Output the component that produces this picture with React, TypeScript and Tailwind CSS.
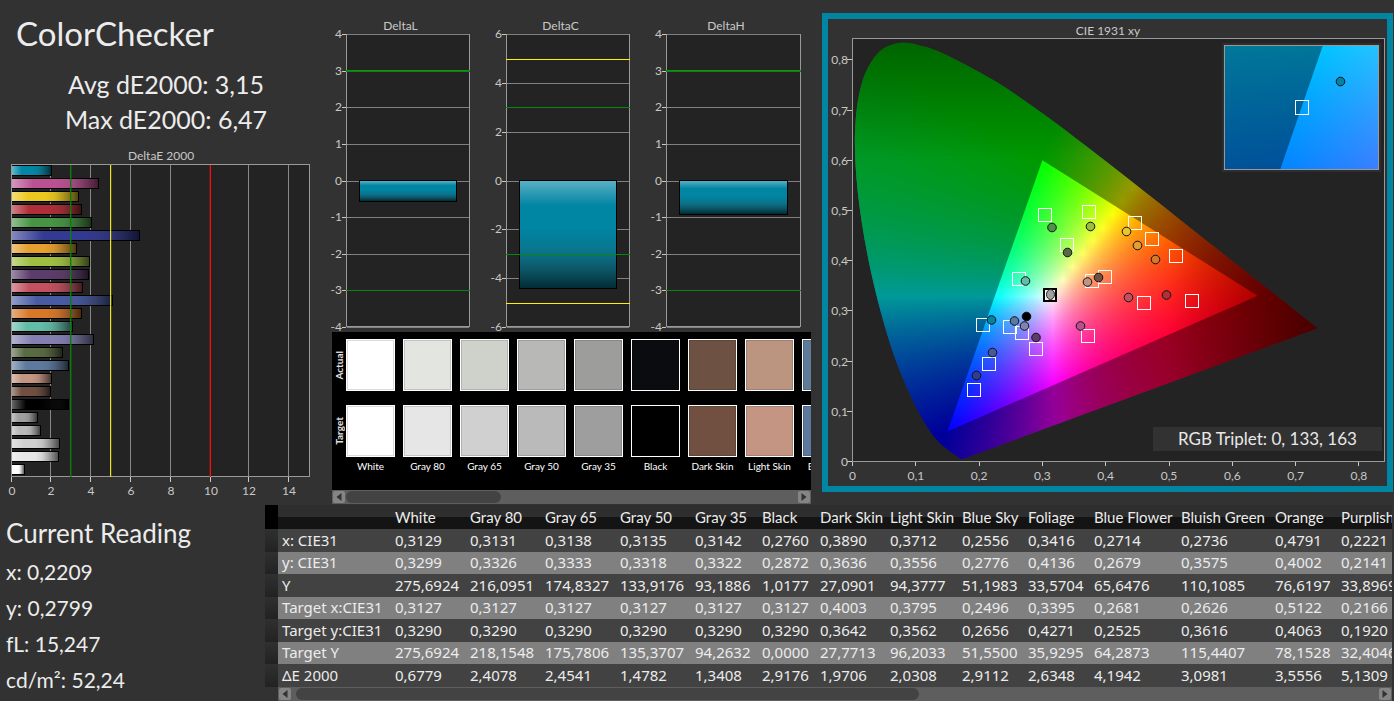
import React from "react";

type Pt = [number, number];

const LATO = "Lato, 'Liberation Sans', sans-serif";

/* ---------- measurement data ---------- */

const barRows: { color: string; value: number }[] = [
  { color: "#0087a5", value: 2.05 },
  { color: "#bb5192", value: 4.42 },
  { color: "#ebc81f", value: 3.42 },
  { color: "#b02e37", value: 3.57 },
  { color: "#479444", value: 4.07 },
  { color: "#323a92", value: 6.47 },
  { color: "#e6a02e", value: 3.32 },
  { color: "#a0bf40", value: 3.97 },
  { color: "#5c3c6a", value: 3.92 },
  { color: "#c35060", value: 3.62 },
  { color: "#485aa2", value: 5.15 },
  { color: "#d97829", value: 3.56 },
  { color: "#61bca8", value: 3.1 },
  { color: "#8380b1", value: 4.19 },
  { color: "#586b41", value: 2.63 },
  { color: "#5d7a9e", value: 2.91 },
  { color: "#c49582", value: 2.05 },
  { color: "#725041", value: 1.99 },
  { color: "#000000", value: 2.92 },
  { color: "#9f9f9f", value: 1.34 },
  { color: "#bababa", value: 1.5 },
  { color: "#d0d0d0", value: 2.46 },
  { color: "#e6e6e6", value: 2.41 },
  { color: "#ffffff", value: 0.7 },
];

const swatches = [
  { name: "White", actual: "bg-[#ffffff]", target: "bg-[#ffffff]" },
  { name: "Gray 80", actual: "bg-[#e3e5e1]", target: "bg-[#e6e6e6]" },
  { name: "Gray 65", actual: "bg-[#cfd1cb]", target: "bg-[#d0d0d0]" },
  { name: "Gray 50", actual: "bg-[#b8b8b6]", target: "bg-[#bababa]" },
  { name: "Gray 35", actual: "bg-[#9d9d9b]", target: "bg-[#9e9e9e]" },
  { name: "Black", actual: "bg-[#0b0c10]", target: "bg-[#000000]" },
  { name: "Dark Skin", actual: "bg-[#6d5142]", target: "bg-[#725041]" },
  { name: "Light Skin", actual: "bg-[#bb9580]", target: "bg-[#c49582]" },
  { name: "Blue Sky", actual: "bg-[#5f7b98]", target: "bg-[#5d7a9e]" },
];

const columns = [
  "White", "Gray 80", "Gray 65", "Gray 50", "Gray 35", "Black", "Dark Skin",
  "Light Skin", "Blue Sky", "Foliage", "Blue Flower", "Bluish Green", "Orange", "Purplish Blue",
];

const columnWidths = [
  "w-[13px]", "w-[113px]", "w-[75px]", "w-[75px]", "w-[75px]", "w-[75px]", "w-[67px]", "w-[58px]",
  "w-[70px]", "w-[72px]", "w-[66px]", "w-[66px]", "w-[87px]", "w-[94px]", "w-[66px]", "w-[100px]",
];

const tableRows: { label: string; cells: string[] }[] = [
  { label: "x: CIE31", cells: ["0,3129", "0,3131", "0,3138", "0,3135", "0,3142", "0,2760", "0,3890", "0,3712", "0,2556", "0,3416", "0,2714", "0,2736", "0,4791", "0,2221"] },
  { label: "y: CIE31", cells: ["0,3299", "0,3326", "0,3333", "0,3318", "0,3322", "0,2872", "0,3636", "0,3556", "0,2776", "0,4136", "0,2679", "0,3575", "0,4002", "0,2141"] },
  { label: "Y", cells: ["275,6924", "216,0951", "174,8327", "133,9176", "93,1886", "1,0177", "27,0901", "94,3777", "51,1983", "33,5704", "65,6476", "110,1085", "76,6197", "33,8969"] },
  { label: "Target x:CIE31", cells: ["0,3127", "0,3127", "0,3127", "0,3127", "0,3127", "0,3127", "0,4003", "0,3795", "0,2496", "0,3395", "0,2681", "0,2626", "0,5122", "0,2166"] },
  { label: "Target y:CIE31", cells: ["0,3290", "0,3290", "0,3290", "0,3290", "0,3290", "0,3290", "0,3642", "0,3562", "0,2656", "0,4271", "0,2525", "0,3616", "0,4063", "0,1920"] },
  { label: "Target Y", cells: ["275,6924", "218,1548", "175,7806", "135,3707", "94,2632", "0,0000", "27,7713", "96,2033", "51,5500", "35,9295", "64,2873", "115,4407", "78,1528", "32,4046"] },
  { label: "ΔE 2000", cells: ["0,6779", "2,4078", "2,4541", "1,4782", "1,3408", "2,9176", "1,9706", "2,0308", "2,9112", "2,6348", "4,1942", "3,0981", "3,5556", "5,1309"] },
];

/* ---------- DeltaE bar chart ---------- */

function DeltaEChart() {
  const grid = [50, 90, 130, 170, 248, 288];
  const ticks: [number, string][] = [
    [11, "0"], [50, "2"], [90, "4"], [130, "6"], [170, "8"], [210, "10"], [248, "12"], [288, "14"],
  ];
  return (
    <svg viewBox="0 148 330 352" className="block w-full" role="img" aria-label="DeltaE 2000" fontFamily={LATO} fontSize="12" fill="#c8c8c8">
      <defs>
        <linearGradient id="shadeH" x1="0" x2="1" y1="0" y2="0">
          <stop offset="0" stopColor="#fff" stopOpacity="0.4" />
          <stop offset="0.25" stopColor="#fff" stopOpacity="0" />
          <stop offset="0.5" stopColor="#333" stopOpacity="0" />
          <stop offset="0.65" stopColor="#333" stopOpacity="0.1" />
          <stop offset="1" stopColor="#000" stopOpacity="0.65" />
        </linearGradient>
      </defs>
      <text x="161" y="160" textAnchor="middle">DeltaE 2000</text>
      <rect x="11.5" y="164.5" width="298" height="312" fill="#232323" />
      <g stroke="#888" shapeRendering="crispEdges">
        {grid.map((x) => <path key={x} d={`M${x + 0.5} 165V476`} />)}
      </g>
      {barRows.map((b, i) => {
        const w = Math.round(b.value * 19.87);
        return (
          <g key={i}>
            <rect x="11" y={165 + 13 * i} width={w} height="11" fill="#000" />
            <rect x="12" y={166 + 13 * i} width={w - 2} height="9" fill={b.color} />
            <rect x="12" y={166 + 13 * i} width={w - 2} height="9" fill="url(#shadeH)" />
          </g>
        );
      })}
      <rect x="11.5" y="164.5" width="298" height="312" fill="none" stroke="#999" />
      <path d="M70.5 165V477" stroke="#0a7d0a" />
      <path d="M71.5 165V477" stroke="#0a7d0a" strokeOpacity="0.4" />
      <path d="M110.5 165V477" stroke="#f0e800" />
      <path d="M111.5 165V477" stroke="#fff" strokeOpacity="0.15" />
      <path d="M210.5 165V477" stroke="#f80c0c" />
      <path d="M209.5 165V477" stroke="#f80c0c" strokeOpacity="0.3" />
      {ticks.map(([x, label]) => (
        <g key={label}>
          <path d={`M${x + 0.5} 477V482`} stroke="#c8c8c8" />
          <text x={x + 1} y="495" textAnchor="middle">{label}</text>
        </g>
      ))}
    </svg>
  );
}

/* ---------- DeltaL / DeltaC / DeltaH ---------- */

type DeltaProps = {
  title: string; x: number; width: number; max: number; step: number;
  bar: number; green: number; yellow?: number;
};

function DeltaPlot({ title, x, width, max, step, bar, green, yellow }: DeltaProps) {
  const yOf = (v: number) => Math.round(180.6 - (v * 146.5) / max);
  const values: number[] = [];
  for (let v = -max; v <= max; v += step) values.push(v);
  return (
    <g>
      <text x={x + width / 2 - 7} y="30" textAnchor="middle">{title}</text>
      <rect x={x + 0.5} y="34.5" width={width} height="292" fill="#232323" stroke="#999" />
      {values.map((v) => (
        <g key={v}>
          <path d={`M${x + 1} ${yOf(v) + 0.5}H${x + width}`} stroke="#808080" />
          <path d={`M${x - 4} ${yOf(v) + 0.5}H${x}`} stroke="#c8c8c8" />
          <text x={x - 4} y={yOf(v) + 4} textAnchor="end">{v}</text>
        </g>
      ))}
      <rect x={x + 13} y="180" width={width - 25} height={yOf(-bar) - 180} fill="#000" />
      <rect x={x + 14} y="181" width={width - 27} height={yOf(-bar) - 182} fill="#0085a3" />
      <rect x={x + 14} y="181" width={width - 27} height={yOf(-bar) - 182} fill="url(#shadeV)" />
      {green % step === 0 && (
        <path d={`M${x} ${yOf(green)}H${x + width + 1}`} stroke="#1c8c1c" strokeWidth="2" />
      )}
      {[green, -green].map((v) => (
        <path key={v} d={`M${x} ${yOf(v) + 0.5}H${x + width + 1}`} stroke="#0a860a" />
      ))}
      {yellow !== undefined && [yellow, -yellow].map((v) => (
        <path key={v} d={`M${x} ${yOf(v) + 0.5}H${x + width + 1}`} stroke="#fff200" />
      ))}
    </g>
  );
}

function DeltaCharts() {
  return (
    <svg viewBox="330 0 482 332" className="block w-full overflow-visible" role="img" aria-label="DeltaL, DeltaC and DeltaH" fontFamily={LATO} fontSize="12" fill="#c8c8c8">
      <defs>
        <linearGradient id="shadeV" x1="0" x2="0" y1="0" y2="1">
          <stop offset="0" stopColor="#fff" stopOpacity="0.35" />
          <stop offset="0.23" stopColor="#fff" stopOpacity="0" />
          <stop offset="0.45" stopColor="#333" stopOpacity="0" />
          <stop offset="0.65" stopColor="#333" stopOpacity="0.2" />
          <stop offset="1" stopColor="#000" stopOpacity="0.68" />
        </linearGradient>
      </defs>
      <DeltaPlot title="DeltaL" x={346} width={123} max={4} step={1} bar={0.58} green={3} />
      <DeltaPlot title="DeltaC" x={506} width={123} max={6} step={2} bar={4.43} green={3} yellow={5} />
      <DeltaPlot title="DeltaH" x={666} width={134} max={4} step={1} bar={0.94} green={3} />
    </svg>
  );
}

/* ---------- CIE chart ---------- */

const locus: Pt[] = [
  [0.1741, 0.005], [0.1714, 0.0051], [0.1644, 0.0109], [0.1566, 0.0177], [0.144, 0.0297],
  [0.1355, 0.0399], [0.1241, 0.0578], [0.1096, 0.0868], [0.0913, 0.1327], [0.0687, 0.2007],
  [0.0454, 0.295], [0.0235, 0.4127], [0.0082, 0.5384], [0.0039, 0.6548], [0.0139, 0.7502],
  [0.0389, 0.812], [0.0743, 0.8338], [0.1142, 0.8262], [0.1547, 0.8059], [0.2296, 0.7543],
  [0.3016, 0.6923], [0.3731, 0.6245], [0.4441, 0.5547], [0.5125, 0.4866], [0.5752, 0.4242],
  [0.627, 0.3725], [0.6658, 0.334], [0.6915, 0.3083], [0.719, 0.2809], [0.7347, 0.2653],
];

const px = (x: number) => 852.5 + x * 633;
const py = (y: number) => 461.5 - y * 502;

function smoothPath(points: Pt[]) {
  const p = points.map(([x, y]) => [px(x), py(y)] as Pt);
  let d = `M${p[0][0]} ${p[0][1]}`;
  for (let i = 0; i < p.length - 1; i++) {
    const a = p[Math.max(i - 1, 0)];
    const b = p[i];
    const c = p[i + 1];
    const e = p[Math.min(i + 2, p.length - 1)];
    d += `C${b[0] + (c[0] - a[0]) / 6} ${b[1] + (c[1] - a[1]) / 6} ${c[0] - (e[0] - b[0]) / 6} ${c[1] - (e[1] - b[1]) / 6} ${c[0]} ${c[1]}`;
  }
  return d + "Z";
}

const locusPath = smoothPath(locus);
const gamutPath = `M${px(0.64)} ${py(0.33)}L${px(0.3)} ${py(0.6)}L${px(0.15)} ${py(0.06)}Z`;

function chromaColor(x: number, y: number) {
  const z = 1 - x - y;
  const rgb = [
    3.2406 * x - 1.5372 * y - 0.4986 * z,
    -0.9689 * x + 1.8758 * y + 0.0415 * z,
    0.0557 * x - 0.204 * y + 1.057 * z,
  ].map((v) => Math.max(v, 0));
  const top = Math.max(...rgb);
  const red = x < 0.5 ? 1 : Math.max(1 - (x - 0.5) * 2.3, 0.5);
  const green = y < 0.6 ? 1 : 1 - (y - 0.6) * 1.45;
  const [r, g, b] = rgb.map((v) => Math.round((v / top) * 255 * red * green));
  return `rgb(${r},${g},${b})`;
}

type FieldProps = {
  id: string; left: number; top: number; width: number; height: number;
  toX: (p: number) => number; toY: (p: number) => number;
};

/* Chromaticity field painted as thin horizontal gradients. */
function ColorField({ id, left, top, width, height, toX, toY }: FieldProps) {
  const rows = Array.from({ length: Math.ceil(height / 2) }, (_, i) => top + i * 2);
  const stops = Math.ceil(width / 10);
  return (
    <g shapeRendering="crispEdges">
      {rows.map((y, i) => (
        <React.Fragment key={y}>
          <linearGradient id={`${id}${i}`} gradientUnits="userSpaceOnUse" x1={left} x2={left + width} y1="0" y2="0">
            {Array.from({ length: stops + 1 }, (_, s) => (
              <stop key={s} offset={s / stops} stopColor={chromaColor(toX(left + (s / stops) * width), toY(y + 1))} />
            ))}
          </linearGradient>
          <rect x={left} y={y} width={width} height={Math.min(2, top + height - y)} fill={`url(#${id}${i})`} />
        </React.Fragment>
      ))}
    </g>
  );
}

const targets: Pt[] = [
  [1045, 215], [1089, 212], [1135, 223], [1152, 239], [1176, 256], [1067, 245], [1019, 279],
  [1105, 277], [1092, 281], [1192, 301], [1144, 303], [983, 325], [1010, 327], [1022, 333],
  [1036, 349], [1088, 336], [989, 364], [974, 390],
];

const readings: [number, number, string][] = [
  [1052, 227.5, "#4a9446"], [1090.5, 226.5, "#a0bc40"], [1126.5, 231.5, "#e8c828"],
  [1137.5, 245.5, "#e6a030"], [1155.5, 259.5, "#d87828"], [1067.5, 252.5, "#566a40"],
  [1025.5, 281, "#62bca8"], [1098.5, 277.5, "#705040"], [1087.5, 282, "#c09480"],
  [1128.5, 297.5, "#c05060"], [1166.5, 295, "#b03038"], [991.5, 320, "#0085a3"],
  [1014.5, 321, "#5c7aa0"], [1024.5, 326, "#8480b0"], [1026.5, 316.5, "#000000"],
  [1036, 337.5, "#5c3c6c"], [1080.5, 326, "#b85090"], [992.5, 352.5, "#4858a0"],
  [976.5, 375.5, "#343c90"],
];

function CieChart() {
  const ticks = [0, 0.1, 0.2, 0.3, 0.4, 0.5, 0.6, 0.7, 0.8];
  const label = (t: number) => String(t).replace(".", ",");
  return (
    <svg viewBox="828 19 559 467" className="block w-full" role="img" aria-label="CIE 1931 xy" fontFamily={LATO} fontSize="12" fill="#c8c8c8">
      <defs>
        <clipPath id="locusClip"><path d={locusPath} /></clipPath>
      </defs>
      <text x="1108" y="35" textAnchor="middle">CIE 1931 xy</text>
      <rect x="852.5" y="38.5" width="532" height="423" fill="#232323" stroke="#999" />
      <g clipPath="url(#locusClip)">
        <ColorField id="f" left={853} top={40} width={470} height={422} toX={(p) => (p - 852.5) / 633} toY={(p) => (461.5 - p) / 502} />
        <path d={`M840 30H1384V470H840Z${gamutPath}`} fill="#000" fillOpacity="0.4" fillRule="evenodd" />
      </g>

      {ticks.map((t) => (
        <g key={t}>
          <path d={`M847 ${Math.floor(py(t)) + 0.5}H852`} stroke="#c8c8c8" />
          <text x="848" y={Math.floor(py(t)) + 5} textAnchor="end">{label(t)}</text>
          <path d={`M${Math.floor(px(t)) + 0.5} 462V466`} stroke="#c8c8c8" />
          <text x={px(t)} y="480" textAnchor="middle">{label(t)}</text>
        </g>
      ))}

      <g fill="none" stroke="#fff" shapeRendering="crispEdges">
        {targets.map(([x, y]) => <rect key={`${x}-${y}`} x={x - 6.5} y={y - 6.5} width="13" height="13" />)}
      </g>
      <rect x="1044" y="289" width="12" height="12" fill="#fff" fillOpacity="0.6" stroke="#000" strokeWidth="2" />
      <ellipse cx="1050.5" cy="294.5" rx="4" ry="5" fill="#a0a0a0" stroke="#222" />
      {readings.map(([x, y, c]) => (
        <circle key={`${x}-${y}`} cx={x} cy={y} r="4.3" fill={c} stroke="#111" />
      ))}

      <rect x="1222" y="43" width="159" height="129" fill="#2e2e2e" />
      <ColorField id="z" left={1224} top={45} width={155} height={125} toX={(p) => 0.2088 + (p - 1302) / 3165} toY={(p) => 0.2695 - (p - 107.3) / 2505} />
      <path d="M1224 45H1323L1280 170H1224Z" fill="#000" fillOpacity="0.4" />
      <rect x="1224.5" y="45.5" width="154" height="124" fill="none" stroke="#999" />
      <rect x="1295.5" y="100.5" width="13" height="14" fill="none" stroke="#fff" />
      <circle cx="1340.5" cy="81.5" r="4.3" fill="#0085a3" stroke="#111" />

      <rect x="1153" y="427" width="229" height="24" fill="#323232" />
      <text x="1267.5" y="445" textAnchor="middle" fontSize="17" fill="#e8e8e8">RGB Triplet: 0, 133, 163</text>
    </svg>
  );
}

/* ---------- scroll bar ---------- */

function ArrowButton({ dir }: { dir: "left" | "right" }) {
  return (
    <button type="button" aria-label={`Scroll ${dir}`} className="flex h-3 w-3 shrink-0 items-center justify-center rounded-xs bg-[#858585]">
      <svg viewBox="0 0 8 8" className="h-2 w-2" fill="#333">
        <path d={dir === "left" ? "M6.5 0V8L1.5 4Z" : "M1.5 0V8L6.5 4Z"} />
      </svg>
    </button>
  );
}

function ScrollBar({ thumb }: { thumb: string }) {
  return (
    <div className="flex h-3.5 items-center justify-between gap-px bg-[#5e5e5e] px-px">
      <ArrowButton dir="left" />
      <div className="h-3 flex-1">
        <div className={`h-3 rounded-full bg-[#434343] ${thumb}`} />
      </div>
      <ArrowButton dir="right" />
    </div>
  );
}

/* ---------- panels ---------- */

function SwatchRow({ label, kind }: { label: string; kind: "actual" | "target" }) {
  return (
    <div className="flex h-[52px]">
      <div className="flex w-3.5 shrink-0 items-center justify-center">
        <span className="rotate-180 text-[10px] leading-none font-bold text-[#e0e0e0] [writing-mode:vertical-rl]">{label}</span>
      </div>
      <div className="flex gap-2">
        {swatches.map((s) => (
          <div key={s.name} className={`w-[49px] shrink-0 border border-white shadow-[inset_0_0_0_1px_rgba(0,0,0,0.14)] ${s[kind]}`} />
        ))}
      </div>
    </div>
  );
}

function SwatchPanel() {
  return (
    <section className="ml-0.5 w-[479px]">
      <div className="h-[158px] overflow-hidden bg-black pt-[7px]">
        <SwatchRow label="Actual" kind="actual" />
        <div className="h-3.5" />
        <SwatchRow label="Target" kind="target" />
        <div className="ml-3.5 flex gap-2 pt-[3px] text-[10px] leading-3 text-white">
          {swatches.map((s) => (
            <div key={s.name} className="w-[49px] shrink-0 text-center whitespace-nowrap">{s.name}</div>
          ))}
        </div>
      </div>
      <ScrollBar thumb="w-[155px]" />
    </section>
  );
}

function ReadingsTable() {
  return (
    <section className="min-w-0 flex-1 pr-0.5">
      <div className="overflow-hidden">
        <table className="w-[1172px] table-fixed border-collapse text-left font-['Noto_Sans',sans-serif] text-[15px] leading-5 text-[#ececec]">
          <colgroup>
            {columnWidths.map((w, i) => <col key={i} className={w} />)}
          </colgroup>
          <thead>
            <tr className="h-6 bg-linear-to-b from-[#2e2e2e] from-50% to-[#141414] to-50% font-[Lato,'Liberation_Sans',sans-serif]">
              <td className="bg-black p-0" />
              <td className="p-0" />
              {columns.map((c) => (
                <th key={c} scope="col" className="p-0 pl-1 font-normal whitespace-nowrap">{c}</th>
              ))}
            </tr>
          </thead>
          <tbody>
            {tableRows.map((r) => (
              <tr key={r.label} className="h-[23px] bg-[#424242] even:h-[22px] even:bg-[#808080]">
                <td className="bg-linear-to-b from-[#303030] to-[#222222] p-0" />
                <th scope="row" className="p-0 pb-0.5 pl-1 font-normal whitespace-nowrap">{r.label}</th>
                {r.cells.map((c, i) => <td key={i} className="p-0 pb-0.5 pl-1">{c}</td>)}
              </tr>
            ))}
          </tbody>
        </table>
      </div>
      <div className="ml-[13px]">
        <ScrollBar thumb="ml-1 w-[623px]" />
      </div>
    </section>
  );
}

export default function App() {
  return (
    <main className="min-h-screen overflow-hidden bg-[#323232] font-[Lato,'Liberation_Sans',sans-serif] text-[#ececec]">
      <div className="flex h-[505px]">
        <section className="w-[330px] shrink-0">
          <h1 className="h-[67px] pt-[11px] pl-4 text-[33px] leading-11">ColorChecker</h1>
          <div className="h-[81px] pl-0.5 text-center text-[25px] leading-[35px]">
            <p>Avg dE2000: 3,15</p>
            <p>Max dE2000: 6,47</p>
          </div>
          <DeltaEChart />
        </section>
        <div className="w-[482px] shrink-0">
          <DeltaCharts />
          <SwatchPanel />
        </div>
        <div className="min-w-0 flex-1 pt-[13px] pr-px pl-2.5">
          <section className="border-6 border-[#0085a3]">
            <CieChart />
          </section>
        </div>
      </div>
      <div className="flex">
        <section className="w-[265px] shrink-0 pl-1.5">
          <h2 className="pt-[7px] text-[26px] leading-[42px]">Current Reading</h2>
          <div className="text-[21px] leading-9">
            <p>x: 0,2209</p>
            <p>y: 0,2799</p>
            <p>fL: 15,247</p>
            <p>cd/m²: 52,24</p>
          </div>
        </section>
        <ReadingsTable />
      </div>
    </main>
  );
}
